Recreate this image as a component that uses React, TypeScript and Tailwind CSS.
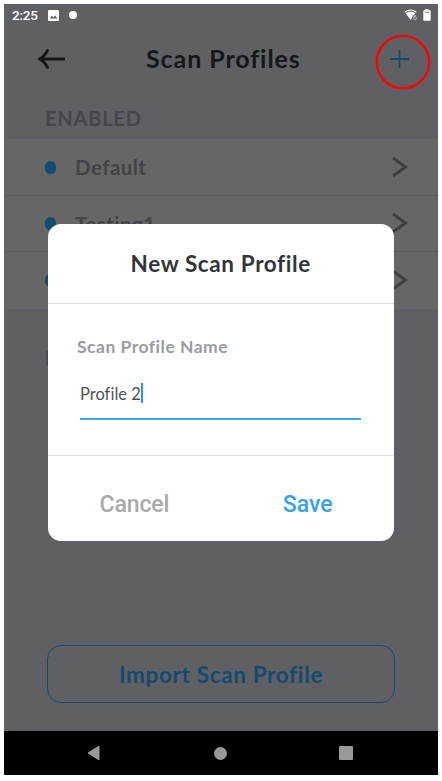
const profiles = ["Default", "Testing1", ""];

function StatusBar() {
  return (
    <div className="flex h-[22px] items-center pl-[8px] pr-[7px] text-white">
      <span className="w-[36px] whitespace-nowrap font-[Roboto,sans-serif] text-[13.5px] font-medium leading-[22px] tracking-[-0.2px]">2:25</span>
      <svg className="mt-px h-[11px] w-[11px]" viewBox="0 0 11 11">
        <rect width="11" height="11" rx="1.2" fill="#fff" />
        <path d="M1.8 8.6 4 5.8 5.4 7.4 7 5.2 9.3 8.6Z" fill="#5f6064" />
      </svg>
      <span className="ml-[10px] h-2 w-2 rounded-full bg-white" />
      <svg className="ml-auto h-[12px] w-[15px]" viewBox="0 0 15 12">
        <path d="M0.8 3.2Q6.5-1.2 12.4 3.2" fill="none" stroke="#fff" strokeWidth="1.2" />
        <path d="M1.6 4.3Q6.5 0.8 11.4 4.3L10 6 8.6 6.6 8 9.6 6.6 10.8Z" fill="#fff" />
        <text x="9" y="10.5" fontSize="7" fontFamily="Roboto, sans-serif" fill="#ddd">6</text>
      </svg>
      <svg className="ml-[4px] h-[12px] w-[8px]" viewBox="0 0 8 12">
        <path d="M2.3 0h3v1.2h1.4q1 0 1 1v8.5q0 1-1 1H1.3q-1 0-1-1V2.2q0-1 1-1h1Z" fill="#fff" />
        <path d="M1.8 3.2h4.4" stroke="#5f6064" strokeWidth=".9" />
      </svg>
    </div>
  );
}

function Header() {
  return (
    <header className="flex h-[68px] items-center pb-[2px] pl-[33px] pr-[29px]">
      <svg className="h-[20px] w-[28px]" viewBox="0 0 28 20" fill="none" stroke="#141517" strokeWidth="2.8" strokeLinecap="round" strokeLinejoin="round">
        <path d="M27 10H2.5M10.5 1.5C9 5 5 9 2.5 10C5 11 9 15 10.5 18.5" />
      </svg>
      <h1 className="ml-[81px] w-[160px] whitespace-nowrap pb-[2px] text-[25px] font-bold leading-[30px] tracking-[0.92px] text-[#161719]">Scan Profiles</h1>
      <svg className="ml-auto h-[18px] w-[19px]" viewBox="0 0 19 18" stroke="#15496b" strokeWidth="1.8">
        <path d="M0 9h19M9.5 0v18" />
      </svg>
    </header>
  );
}

function ProfileRow({ name }: { name: string }) {
  return (
    <div className="flex h-[56.5px] items-center border-b border-[#5d5d5f] pl-[41px] pr-[30px] last:border-b-0">
      <span className="mt-px h-[13px] w-[11px] rounded-full bg-[#154a70]" />
      <span className="ml-[19px] pt-px text-[20.5px] font-bold leading-[28px] tracking-[0.45px] text-[#424348]">{name}</span>
      <svg className="ml-auto h-[20px] w-[16px]" viewBox="0 0 16 20" fill="none" stroke="#3d3e43" strokeWidth="2.9">
        <path d="M1 1 13.5 10 1 19" />
      </svg>
    </div>
  );
}

function NewProfileDialog() {
  return (
    <section className="absolute left-[43.5px] top-[219.5px] flex h-[317.5px] w-[346.5px] flex-col rounded-[13px] bg-white">
      <div className="flex h-[80px] items-center justify-center border-b border-[#dfe0e6]">
        <h2 className="whitespace-nowrap pt-px text-[22.5px] font-bold leading-[28px] tracking-[0.62px] text-[#333439]">New Scan Profile</h2>
      </div>
      <div className="flex h-[152px] flex-col border-b border-[#e2e2e2] pl-[29.5px] pr-[33px] pt-[31px]">
        <label className="whitespace-nowrap text-[17.5px] font-bold leading-[24px] tracking-[0.5px] text-[#999ba3]">Scan Profile Name</label>
        <div className="ml-[3px] mt-[17px] flex h-[44px] items-start border-b-2 border-[#3ba4ef] pt-[6px]">
          <span className="whitespace-nowrap text-[16.5px] leading-[24px] tracking-[0.01px] text-[#505157]">Profile 2</span>
          <span className="mt-px h-[20px] w-[2px] bg-[#2196f3]" />
        </div>
      </div>
      <div className="flex flex-1 items-center pb-px pl-[52px] pr-[61.5px] pt-[14px] font-[Roboto,sans-serif] text-[23px] font-medium">
        <span className="tracking-[-0.1px] text-[#a9a9a9]">Cancel</span>
        <span className="ml-auto text-[#38a2f2]">Save</span>
      </div>
    </section>
  );
}

export default function App() {
  return (
    <div className="h-[781px] w-[442px] bg-white p-1 font-[Lato,sans-serif]">
      <main className="relative flex h-[771px] w-[434px] flex-col overflow-hidden bg-[#5f6064]">
        <StatusBar />
        <Header />
        <h3 className="h-[45px] pl-[41px] pt-[12px] text-[20px] font-bold leading-[24px] tracking-[0.8px] text-[#45464b]">ENABLED</h3>
        <div className="h-[170px] bg-[#666]">
          {profiles.map((name, i) => <ProfileRow key={i} name={name} />)}
        </div>
        <span className="ml-[42px] mt-[42px] h-[14px] w-[2px] bg-[#4b4c51]" />
        <div className="mx-[43px] mb-[28px] mt-auto flex h-[58px] shrink-0 items-center justify-center rounded-[14px] border-[1.5px] border-[#154a70]">
          <span className="whitespace-nowrap pt-px text-[22.5px] font-bold leading-[28px] tracking-[0.65px] text-[#154a70]">Import Scan Profile</span>
        </div>
        <nav className="flex h-[44px] shrink-0 items-center justify-between bg-black pl-[83px] pr-[85px]">
          <svg className="h-[16px] w-[13px]" viewBox="0 0 13 16"><path d="M1 8 12 1v14Z" fill="#999" stroke="#999" strokeLinejoin="round" /></svg>
          <span className="ml-[2px] h-[13px] w-[13px] rounded-full bg-[#999]" />
          <span className="h-[14px] w-[14px] rounded-[1px] bg-[#999]" />
        </nav>
        <NewProfileDialog />
        <svg className="absolute left-[371px] top-[30px] h-[56px] w-[56px]" viewBox="0 0 56 56">
          <circle cx="27.9" cy="28.1" r="26.2" fill="none" stroke="#f00" strokeWidth="2.4" />
        </svg>
      </main>
    </div>
  );
}
